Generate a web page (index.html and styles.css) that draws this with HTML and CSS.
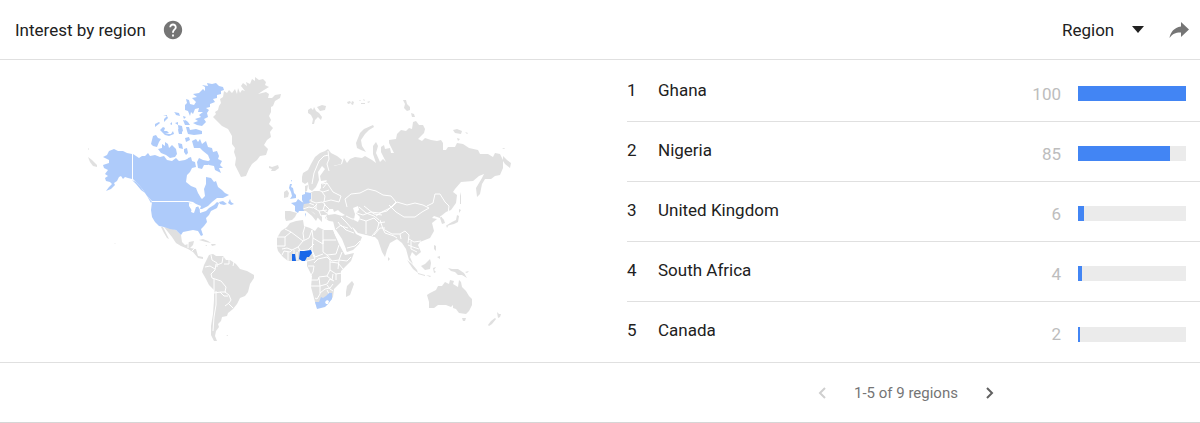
FILE: index.html
```html
<!DOCTYPE html>
<html lang="en">
<head>
    <meta charset="UTF-8">
    <meta name="viewport" content="width=device-width, initial-scale=1.0">
    <title>Interest by region</title>
    <link rel="stylesheet" href="styles.css">
</head>
<body>
    <section class="widget">
        <header class="widget-header">
            <h1 class="widget-title">Interest by region</h1>
            <button class="icon-btn help" type="button" aria-label="Help">
                <svg viewBox="0 0 24 24" width="22" height="22"><path fill="#757575" d="M12 2C6.48 2 2 6.48 2 12s4.480 10 10 10 10-4.480 10-10S17.520 2 12 2zm1 17h-2v-2h2v2zm2.070-7.750l-.9.920C13.450 12.900 13 13.500 13 15h-2v-.5c0-1.100.450-2.100 1.170-2.830l1.240-1.260c.37-.36.590-.86.590-1.410 0-1.100-.9-2-2-2s-2 .9-2 2H8c0-2.210 1.790-4 4-4s4 1.790 4 4c0 .88-.36 1.680-.93 2.250z"/></svg>
            </button>
            <div class="resolution">
                <select id="resolution" aria-label="Resolution">
                    <option>Region</option>
                    <option>City</option>
                </select>
                <svg class="arrow" viewBox="0 0 12 7" width="12" height="7"><path fill="#212121" d="M0 0h12L6 7z"/></svg>
            </div>
            <button class="icon-btn" type="button" aria-label="Share">
                <svg viewBox="0 0 20 16" width="20" height="16"><path fill="#757575" d="M12 0l8 7.500L12 15v-4.500C7 10.300 3.300 11.800.5 16 1.500 10.500 4.800 5.500 12 4.500z"/></svg>
            </button>
        </header>

        <div class="widget-body">
            <div class="map">
                <svg class="world" viewBox="80 70 440 280" role="img" aria-label="World map of interest by region">
                    <!-- countries without data -->
                    <g class="land">
                        <!-- Greenland, Iceland -->
                        <path d="M213 117L216 114 215 112 218 110 219 106 221 103 220 99 223 97 224 91 227 93 229 90 232 93 235 89 237 94 238 88 240 93 242 90 245 91 241 86 243 83 247 86 246 82 250 84 252 79 255 81 255 77 259 80 263 79 266 82 265 85 269 87 264 90 258 94 266 92 269 94 268 98 272 98 275 95 281 94 280 98 275 101 273 106 271 107 271 112 269 116 271 120 269 124 273 128 270 132 271 137 267 140 264 145 268 149 266 155 260 156 257 160 252 164 249 169 246 176 241 177 238 171 235 165 236 158 234 152 235 148 232 144 232 136 228 129 222 126z"/>
                        <path d="M269 166l3 1 3-1 3-1 1 3-4 3-4 0 1-2-3-1z"/>
                        <!-- Svalbard and the arctic islands -->
                        <path d="M308 110l3-2 2 2 1-3 2 4 3 2 3 4-1 3-3-3-3 3-1 4-2 0 1-5-2-4-3-2zM317 107l5-2 4 1-1 4-5 1z"/>
                        <path d="M347 102l3-1 1 2-3 1zM352 101l2 1-1 3-2-1zM359 101l1-1 1 1zM363 99l2 1-1 1zM361 103l4 0 0 1-4 0zM367 102l3-1-1 2z"/>
                        <path d="M357 148L356 143 358 138 360 133 364 129 373 125 374 127 369 130 365 134 361 140 362 146 366 152 361 150z"/>
                        <path d="M403 100l3 0 1 4 3 3 0 3-3 1-3-3 1-4zM411 113l3 1 1 3-3 0zM453 130l4-1 5 2-1 3-6-1zM465 132l3 1-1 1zM457 138l3 1-2 2zM502 148l3 0-1 1z"/>
                        <!-- Russia, Central and East Asia -->
                        <path d="M326 166L331 160 334 166 342 164 344 158 347 163 350 159 355 157 362 158 365 156 372 160 376 163 373 154 373 146 376 142 378 146 376 153 380 162 383 159 386 162 381 152 381 147 384 145 385 149 390 148 391 153 394 153 389 143 389 140 396 139 397 134 401 130 406 131 409 128 412 129 413 122 416 121 419 125 423 125 425 129 424 133 418 139 422 141 425 138 431 140 437 141 441 140 443 143 443 150 446 150 448 147 455 147 457 143 463 144 469 148 478 150 480 154 488 154 493 157 495 153 500 154 503 160 503 168 500 175 495 176 491 179 485 179 482 184 480 194 477 197 476 188 482 178 484 174 479 176 473 181 461 182 455 189 453 192 457 195 456 203 451 210 446 212 441 216 444 220 445 223 442 224 440 218 434 216 432 218 437 219 432 223 434 231 430 238 420 242 418 245 421 252 416 256 412 252 410 257 413 264 409 260 406 249 402 243 397 239 390 243 387 250 385 257 382 252 378 240 375 237 366 235 358 233 351 225 345 216 342 208 330 206 326 190 327 176z"/>
                        <path d="M503 156L507 160 511 163 510 168 505 164 503 161z"/>
                        <!-- Norway, Sweden, Finland, Denmark -->
                        <path d="M302 177L303 173 308 170 311 164 315 157 320 153 325 151 328 149 331 153 337 156 342 160 341 164 333 166 333 174 328 180 321 181 320 176 325 169 322 166 318 172 319 180 316 187 312 191 309 189 308 182 305 184 302 182z"/>
                        <path d="M305 186l3-1-1 6-2 1z"/>
                        <!-- continental Europe and Turkey -->
                        <path d="M310 193L314 191 319 191 321 188 321 184 330 180 340 185 347 210 345 218 336 222 329 221 325 218 326 215 322 215 322 222 319 219 314 213 311 211 318 217 316 221 312 216 306 211 302 211 301 204 306 198z"/>
                        <path d="M285 211L290 211 297 213 295 217 292 220 286 221 285 218z"/>
                        <path d="M284 192l3-2 2 3-1 4-4 1z"/>
                        <!-- Middle East -->
                        <path d="M333 221L342 218 352 212 374 216 382 234 375 237 364 234 352 227 356 234 362 237 359 244 353 250 347 252 343 244 338 236 335 229z"/>
                        <!-- Africa -->
                        <path d="M290 223L296 221 303 220 304 226 310 228 315 231 318 227 324 230 333 230 336 237 339 244 345 255 354 253 351 261 346 266 341 271 341 282 334 289 333 297 327 305 317 308 315 302 311 287 312 276 307 266 307 261 303 259 298 261 288 261 283 257 278 251 277 247 277 238 281 231 287 227z"/>
                        <path d="M352 281L354 284 350 295 346 297 346 292 347 286z"/>
                        <!-- Mexico and Central America -->
                        <path d="M164 227L170 228 176 230 181 235 182 242 185 245 188 244 189 242 194 241 193 245 190 248 196 249 198 256 203 257 203 259 198 258 193 252 188 249 181 246 176 243 172 237 168 232z"/>
                        <path d="M161 227l2 0 3 6 3 6-2-1-3-5z"/>
                        <path d="M199 240l4-1 5 2 3 2-5-1zM211 244l4 0 1 1-4 1zM205 245l2 0 0 1z"/>
                        <!-- South America -->
                        <path d="M207 259L209 255 213 254 216 256 223 256 226 260 230 260 236 264 240 269 247 271 254 275 254 278 250 284 248 292 245 296 240 298 237 304 233 309 228 313 227 316 222 317 221 321 218 324 219 327 216 331 215 336 217 341 214 341 211 335 211 326 213 314 214 300 214 290 209 285 206 279 202 272 204 265z"/>
                        <path d="M226 335l2 0 0 1z"/>
                        <!-- South-east Asia and Japan -->
                        <path d="M407 260l5 4 5 6 1 3-5-4zM418 273l7 2 0 1-7-2zM421 266l4-2 5-5 1 4-1 6-5 1zM433 268l3-1-2 3 2 2-2 1zM434 245l2 1 0 5-2-2zM437 257l3-1 0 3zM448 268l4 1 6 0 6 4 3 5-5-3-4 0-3-3-4-1zM388 257l2 2-2 2zM426 275l5 1-1 1zM465 272l4-1-2 2z"/>
                        <path d="M459 209l2 1-2 3zM457 215l2 1-1 6-4 2-4 1-3 1 0-1 5-3 4-2zM446 225l2 1-1 2zM460 192l1 4 0 8-1 0z"/>
                        <!-- Australia and New Zealand -->
                        <path d="M427 295L430 293 436 290 438 286 442 286 445 282 449 284 450 280 454 281 453 284 458 287 459 280 461 282 462 287 466 291 469 296 472 299 472 305 469 311 466 314 459 313 456 309 453 308 453 305 451 307 446 305 438 305 434 308 429 308 429 302z"/>
                        <path d="M462 318l4 0-1 3-2 0zM497 312l2 2 2 0-1 3-2 1zM495 318l1 1-4 5-3 2-1-1 3-4z"/>
                        <!-- western Aleutians -->
                        <path d="M88 148l1 1-1 1zM88 157l4 3 5 5 0 2-4-1-3-4zM114 243l2 1-1 0z"/>
                    </g>

                    <!-- seas cut back out of the land -->
                    <g class="water">
                        <path d="M327 213L329 209 333 209 334 212 338 210 340 212 345 215 342 216 335 214 328 215z"/>
                        <path d="M353 208L358 206 359 210 356 213 360 217 358 222 354 220 355 214z"/>
                        <path d="M333 229L336 230 342 239 346 249 346 253 343 251 340 244 335 235z"/>
                    </g>

                    <!-- country borders -->
                    <g class="borders">
                        <path d="M328 151l1 8-2 5 2 7M312 184l2-11 5-12 5-5 5-1"/>
                        <path d="M311 193v8l5 2 6-1 3 2-2 6 4 3M322 192l3 4-1 6M322 184l5-1 6 9 8 4-2 6-8-2-8 2M327 183l-4 5M318 190l5 2 6-2M303 209l6-2 4 1 4-4M309 203l5 2M314 208l5 3 8-1M319 211l2 5 6-1M316 205l0 4M324 204l6 6M325 215l2 4"/>
                        <path d="M347 207l-2-8 6-5 9-1 8-4 8 2 7 4 8 1 5 6-5 5-4 4-8 2-8-1-8 3-6-2-2-4M376 216l6-4 10-5 5-5 10 3 8-2 8 2 6 3-7 4-7 5-11 0-8-5-7-7M427 206l6-3 2-9 5 0 5 8 4 4-1 8-6 4M346 216l6 3 8 0 6 2 0 13M366 221l8-3 5 5-2 7-5 6M380 220l3 9 9 5 8 0 5-3 4 4-1 8M359 207l7 6 8 3 5 4M364 206l10 8 8 1M378 223l7-1M374 235l6-7 5 0M383 229l2 4 9 3 3 2M400 234l1 5M409 239l5 3 7-1M411 241l0 8 6 3M408 245l5 2 6 2M341 217l5 5 6 7M338 222l3 4 7 2M336 229l5-4 5 5 8 3M347 248l8-2 5-5M440 217l7-3"/>
                        <!-- Africa -->
                        <path d="M285 229l6 3-6 5v9h-8M277 237h8M291 232l12 9 6-3 3-8M305 226l-2 7 1 7M312 230l1 8 10 6v-14M323 240h13M323 240v12l4 3 9-1 3-9M313 238l-1 12 3 7M303 241l-5 6-6 3-5-2-5 1M298 247l2 3M292 250l-2 2-6-1-2 4M288 252v9M294 250l0 11M297 252v8M298 251l10-1 6-6M311 250l4 9-8 2M315 257l8-3M314 263l4-4 9-2 3 3 0 10-3 6-8 1-1 3h-7M308 266h6l-1 6-2 3M327 255l5 6 7-1 3-8M339 260l8 1 4-4M339 260l-1 9M330 262l8 1 5 6M330 270l6 4 6-1M327 276l5 4 1-6M319 278l1 8h-9M320 286l7-2 3-5 4 2M320 286v8l-3 5-2-1M320 293l5-4 5-1 3-4M327 285l3 4 3 2M327 290l2 4 3 1M336 274l0 6"/>
                        <!-- the Americas -->
                        <path d="M211 255l1 5 5 3 0 4M223 257l-1 6-5 2M229 259v5h-5M234 262l-1 4M216 264l-1 6-4 4 1 4 9 3 5 6-1 5 4 3 2 5-2 3-4 3M205 267l5-1 5 3M214 279v14l7-1 5 0M220 292l4 4 4 0M229 304l4 4M216 291L216 305 214 317 213 331M188 243v5M195 248l-3 3"/>
                    </g>

                    <!-- regions with low interest -->
                    <g class="low">
                        <!-- Alaska -->
                        <path d="M103 157L107 155 109 151 114 149 118 151 123 151 127 153 132 154 132 179 128 178 125 177 123 179 121 176 119 177 117 181 114 183 115 185 111 189 106 191 109 187 112 184 110 182 106 181 105 178 108 176 105 174 108 170 104 168 103 165 109 163 109 160z"/>
                        <!-- Canada mainland -->
                        <path d="M133 154L136 156 139 158 142 156 145 156 148 153 150 156 155 155 160 157 164 156 167 160 172 161 176 158 179 161 185 160 189 158 192 161 195 162 196 167 192 168 190 172 187 175 186 182 191 186 196 188 198 193 201 198 202 199 205 196 204 189 206 184 206 177 211 178 214 182 216 181 218 187 222 190 225 193 229 195 223 198 217 198 212 202 208 206 202 209 200 209 201 206 196 204 193 202 188 201 152 201 147 196 143 190 139 185 133 179z"/>
                        <path d="M219 202L223 201 227 204 224 205 220 204zM228 203L230 199 231 202 234 204 231 205zM147 196l5 6-1 1z"/>
                        <path d="M132 180L136 182 140 186 145 193 141 190 136 184z"/>
                        <!-- Baffin, Victoria and the arctic archipelago -->
                        <path d="M152 140L153 136 156 135 158 138 161 139 159 142 157 147 153 146 151 144z"/>
                        <path d="M158 149L162 148 162 144 165 146 165 142 168 144 169 148 172 145 176 149 177 154 175 157 170 158 166 155 161 153z"/>
                        <path d="M192 141L196 139 198 142 200 139 202 144 206 141 208 147 212 148 213 152 217 151 219 156 218 159 222 161 220 165 223 168 219 168 221 173 215 170 214 166 209 165 205 163 210 160 208 155 203 151 200 148 194 148z"/>
                        <path d="M197 162L199 158 203 160 208 161 208 165 204 165 202 169 198 168zM184 149L187 148 188 153 186 155 184 152zM188 158l3-1 1 4-4 1zM178 143l4 1 1 5-4-1zM185 138l4-1 1 3-4 2z"/>
                        <path d="M155 124l4-2 1 1-5 4zM160 130l3-3 2 1-1 3 3 0 2 2-4 1 6 0 2-3 1 3-5 2-4-1zM164 119l3-3 1 2-4 4zM163 116l4-1 0 1zM174 112l5 1 1 3-4-1-1-2zM170 124l2-2 0 3zM178 125l4 1 1 5-4 3zM183 120l4 1 1 4-3 0zM175 123l3-1 0 3zM183 116l3 1-2 2z"/>
                        <path d="M186 127L189 127 190 130 196 129 202 131 202 134 194 135 188 134 187 131zM178 129l4 1 0 4-3 0zM185 120l3 2 2 3-4 0zM194 142l3 0 1 3-4 1z"/>
                        <!-- Ellesmere and Axel Heiberg -->
                        <path d="M185 105L187 103 186 99 189 100 190 104 194 105 196 102 192 98 197 97 193 94 199 93 203 89 205 91 205 87 202 85 208 86 207 83 212 84 216 83 219 86 223 87 224 90 221 91 221 94 217 95 217 98 213 99 215 102 210 104 210 107 206 108 209 110 207 113 208 117 204 119 206 122 202 126 197 125 193 123 198 121 195 119 201 117 199 115 203 112 198 112 199 108 195 109 193 114 191 112 190 116 188 111 185 110z"/>
                        <!-- United States -->
                        <path d="M152 202L188 202 192 204 193 206 191 212 194 213 196 207 198 206 200 210 200 213 206 211 209 208 214 205 217 202 219 203 217 208 211 211 209 215 206 218 207 222 204 226 201 229 203 235 201 236 198 231 193 230 188 231 183 232 181 235 176 230 170 229 164 227 159 226 155 222 152 217 151 210z"/>
                        <!-- United Kingdom, France, Germany -->
                        <path d="M290 184L292 184 291 187 293 188 294 193 296 195 296 198 290 199 292 196 291 192 289 188zM291 180l1 0-1 2z"/>
                        <path d="M291 203L296 202 298 199 302 202 304 203 303 208 304 211 299 211 298 213 295 211 295 206zM305 213l1 1-1 3z"/>
                        <path d="M302 195L305 194 305 192 311 193 311 199 309 200 310 203 304 204 302 200z"/>
                        <!-- South Africa -->
                        <path d="M315 302L319 302 321 297 323 298 326 296 329 293 332 293 332 299 328 304 325 307 317 309z"/>
                    </g>
                    <path class="lesotho" d="M325 302l2-2 2 1-1 3-2 0z"/>
                    <path class="lake" d="M189 203L194 204 198 206 197 207 194 207 193 213 191 209 189 206zM199 211L204 209 202 212z"/>

                    <!-- Ghana, Nigeria -->
                    <path class="high" d="M292 254L295 254 296 261 292 261zM300 251L304 251 311 250 312 253 309 257 307 257 305 261 302 261 299 259z"/>
                </svg>
            </div>

            <ol class="regions">
                <li class="region">
                    <span class="rank">1</span>
                    <span class="name">Ghana</span>
                    <span class="value">100</span>
                    <span class="bar"><span class="bar-fill" style="width: 100%"></span></span>
                </li>
                <li class="region">
                    <span class="rank">2</span>
                    <span class="name">Nigeria</span>
                    <span class="value">85</span>
                    <span class="bar"><span class="bar-fill" style="width: 85%"></span></span>
                </li>
                <li class="region">
                    <span class="rank">3</span>
                    <span class="name">United Kingdom</span>
                    <span class="value">6</span>
                    <span class="bar"><span class="bar-fill" style="width: 6%"></span></span>
                </li>
                <li class="region">
                    <span class="rank">4</span>
                    <span class="name">South Africa</span>
                    <span class="value">4</span>
                    <span class="bar"><span class="bar-fill" style="width: 4%"></span></span>
                </li>
                <li class="region">
                    <span class="rank">5</span>
                    <span class="name">Canada</span>
                    <span class="value">2</span>
                    <span class="bar"><span class="bar-fill" style="width: 2%"></span></span>
                </li>
            </ol>
        </div>

        <footer class="widget-footer">
            <nav class="pager" aria-label="Pages">
                <button class="icon-btn" type="button" aria-label="Previous" disabled>
                    <svg viewBox="0 0 8 12" width="8" height="12"><path fill="none" stroke="#cfcfcf" stroke-width="2" d="M7 1L2 6l5 5"/></svg>
                </button>
                <span class="pager-text">1-5 of 9 regions</span>
                <button class="icon-btn" type="button" aria-label="Next">
                    <svg viewBox="0 0 8 12" width="8" height="12"><path fill="none" stroke="#616161" stroke-width="2" d="M1 1l5 5-5 5"/></svg>
                </button>
            </nav>
        </footer>
    </section>
</body>
</html>
```
FILE: styles.css
```css
* {
    box-sizing: border-box;
}
body {
    margin: 0;
    background: #fff;
    color: #212121;
    font-family: Roboto, "Liberation Sans", sans-serif;
    font-size: 17px;
    line-height: 20px;
}
.widget {
    border-bottom: 1px solid #d6d6d6;
}
.widget-header {
    display: flex;
    align-items: center;
    height: 60px;
    padding: 0 11px 0 15px;
    border-bottom: 1px solid #e0e0e0;
}
.widget-title {
    margin: 0;
    font-size: 17px;
    font-weight: 400;
}
.icon-btn {
    display: flex;
    padding: 0;
    border: none;
    background: none;
    cursor: pointer;
}
.icon-btn:disabled {
    cursor: default;
}
.help {
    margin-left: 16px;
}
.resolution {
    display: grid;
    align-items: center;
    margin: 0 25px 0 auto;
}
.resolution select {
    grid-area: 1 / 1;
    width: 82px;
    padding: 0;
    border: none;
    background: none;
    color: inherit;
    font: inherit;
    appearance: none;
}
.arrow {
    grid-area: 1 / 1;
    justify-self: end;
    pointer-events: none;
}
.widget-body {
    display: grid;
    grid-template-columns: 52fr 48fr;
    border-bottom: 1px solid #e0e0e0;
}
.map {
    display: flex;
    align-items: center;
    justify-content: center;
    padding: 0 24px 2px 0;
}
.world {
    width: 100%;
    max-width: 440px;
}
.land {
    fill: #e0e0e0;
}
.water,
.lake,
.lesotho {
    fill: #fff;
}
.borders {
    fill: none;
    stroke: #fff;
    stroke-width: 1;
    stroke-linejoin: round;
}
.low {
    fill: #aecbfa;
}
.high {
    fill: #1967e8;
}
.regions {
    margin: 0;
    padding: 2px 0 0 3px;
    list-style: none;
}
.region {
    display: flex;
    align-items: center;
    height: 60px;
    padding-right: 14px;
    border-bottom: 1px solid #e0e0e0;
}
.region:last-child {
    border-bottom: none;
}
.rank {
    width: 31px;
}
.rank,
.name {
    padding-bottom: 4px;
}
.value {
    margin-left: auto;
    padding-top: 4px;
    color: #bdbdbd;
}
.bar {
    width: 108px;
    height: 15px;
    margin: 4px 0 0 17px;
    background: #ebebeb;
}
.bar-fill {
    display: block;
    height: 100%;
    background: #4285f4;
}
.widget-footer {
    display: flex;
    justify-content: center;
    width: 48%;
    margin-left: auto;
    padding: 20px 12px 19px 0;
}
.pager {
    display: flex;
    align-items: center;
    gap: 28px;
    color: #757575;
    font-size: 15px;
}
```
